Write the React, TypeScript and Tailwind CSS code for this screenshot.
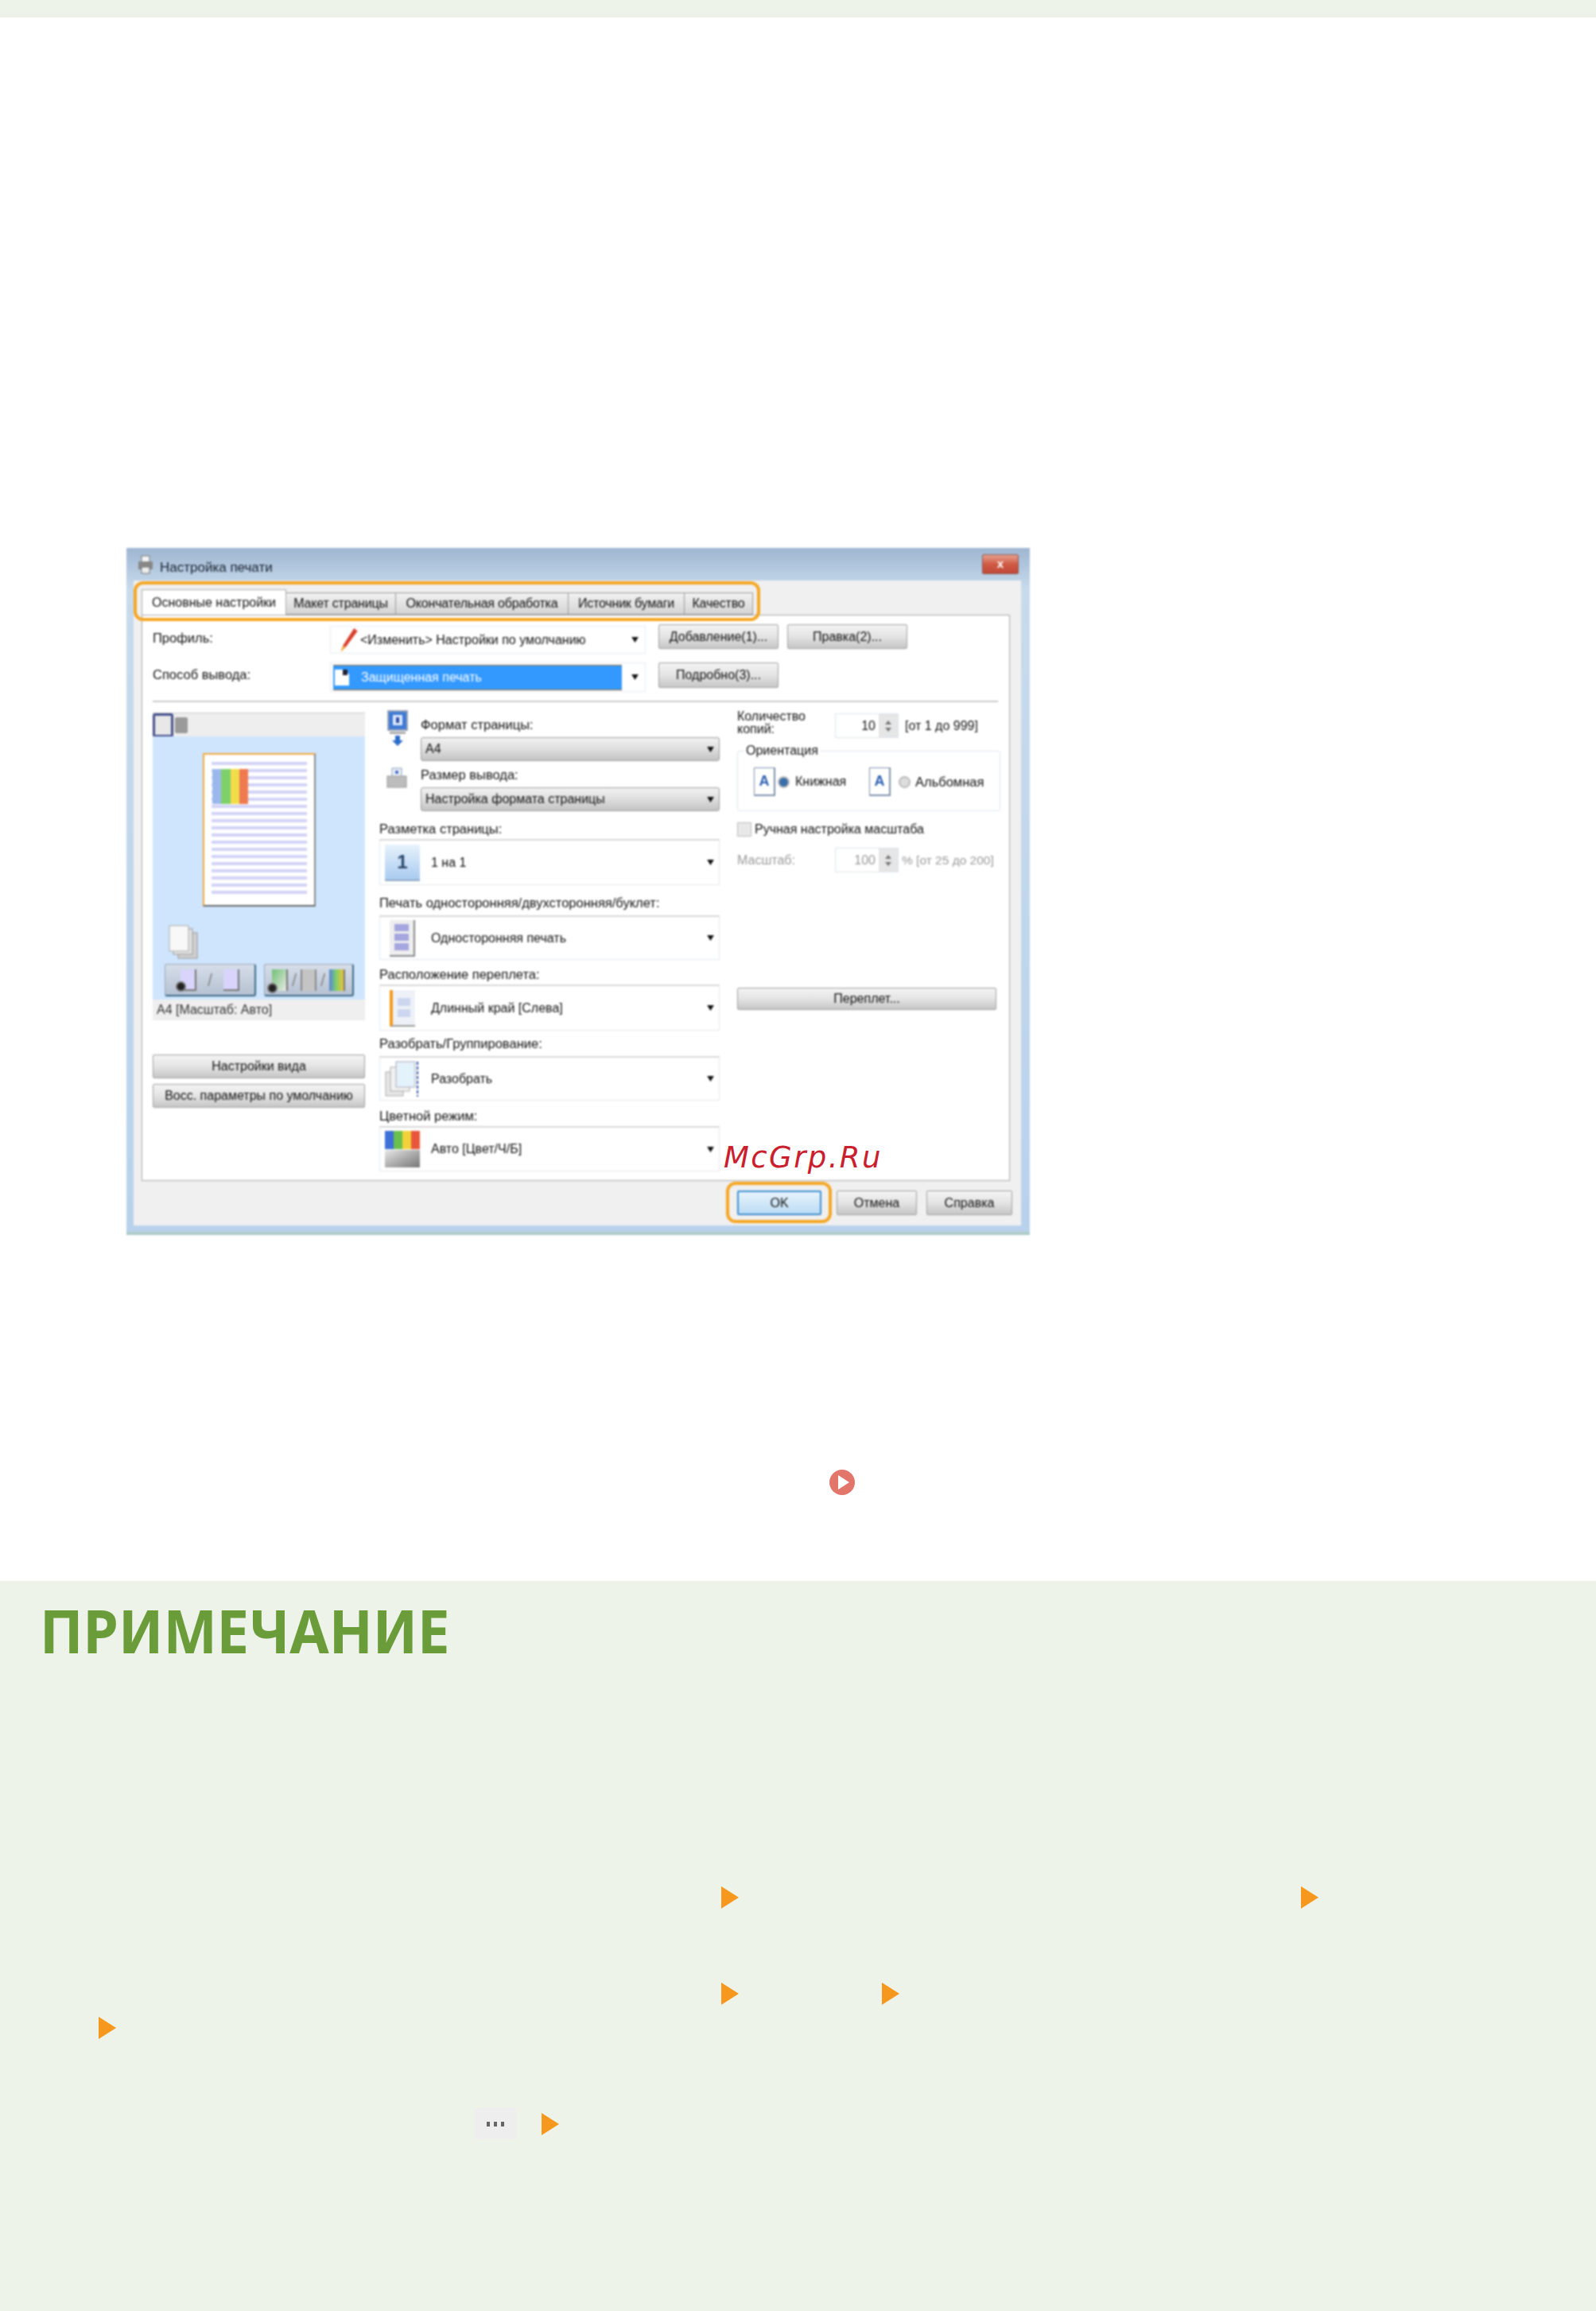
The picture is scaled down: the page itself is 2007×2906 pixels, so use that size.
import type { ReactNode } from 'react';

const Tri = ({ className = '' }: { className?: string }) => (
    <svg viewBox="0 0 22 28" className={`w-[22px] h-[28px] shrink-0 ${className}`}>
        <polygon points="0,0 22,14 0,28" fill="#f6981e" />
    </svg>
);

const Caret = () => (
    <svg viewBox="0 0 10 8" className="w-[9px] h-[7px] shrink-0">
        <polygon points="0,0 10,0 5,8" fill="#111" />
    </svg>
);

const Btn = ({ children, className = '' }: { children: ReactNode; className?: string }) => (
    <div
        className={`flex items-center justify-center rounded-[2px] border border-[#a0a0a0] bg-linear-to-b from-[#f4f4f4] via-[#e4e4e4] to-[#c6c6c6] text-[16px] text-[#111] whitespace-nowrap ${className}`}>
        {children}
    </div>
);

const GraySelect = ({ text }: { text: string }) => (
    <div className="flex items-center justify-between h-[30px] rounded-[3px] border border-[#9a9a9a] bg-linear-to-b from-[#f2f2f2] via-[#dedede] to-[#c4c4c4] pl-[5px] pr-[6px] text-[16px] text-[#111]">
        <span>{text}</span>
        <Caret />
    </div>
);

// Page icons from the dropdown boxes
const LayoutIcon = () => (
    <div className="flex items-center justify-center w-[44px] h-[46px] bg-linear-to-b from-[#e8f2fc] to-[#a9cbf0] border-b-2 border-[#8fa9c4] text-[24px] font-bold text-[#2b4a6d]">
        1
    </div>
);

const SidedIcon = () => (
    <div className="flex flex-col justify-center gap-[3px] w-[32px] h-[46px] ml-[6px] bg-[#eeeeee] border-r-2 border-b-2 border-[#888] px-[6px]">
        <div className="h-[9px] bg-[#a5a5e0]" />
        <div className="h-[9px] bg-[#a5a5e0]" />
        <div className="h-[9px] bg-[#a5a5e0]" />
    </div>
);

const BindingIcon = () => (
    <div className="flex flex-col justify-center gap-[4px] w-[32px] h-[46px] ml-[6px] bg-[#eef2f8] border-l-4 border-[#f29a1f] border-b-2 border-b-[#999] px-[6px]">
        <div className="h-[10px] bg-[#ccd6ee]" />
        <div className="h-[10px] bg-[#ccd6ee]" />
    </div>
);

const CollateIcon = () => (
    <svg viewBox="0 0 44 46" className="w-[44px] h-[46px]">
        <rect x="1" y="14" width="22" height="30" fill="#e6e6e6" stroke="#aaa" />
        <rect x="7" y="8" width="24" height="30" fill="#f2f2f2" stroke="#aaa" />
        <rect x="14" y="1" width="24" height="32" fill="#e4f2fc" stroke="#aab" />
        <line x1="41" y1="1" x2="41" y2="45" stroke="#3b5aa8" strokeWidth="2" strokeDasharray="4 2" />
    </svg>
);

const ColorIcon = () => (
    <div className="flex flex-col w-[44px] h-[46px]">
        <div className="flex h-[23px]">
            <div className="flex-1 bg-[#3f6fd8]" />
            <div className="flex-1 bg-[#69c04c]" />
            <div className="flex-1 bg-[#f2d23a]" />
            <div className="flex-1 bg-[#e8563c]" />
        </div>
        <div className="h-[23px] mt-[1px] bg-linear-to-br from-[#e8e8e8] to-[#777]" />
    </div>
);

const OPTION_BOXES = [
    { label: 'Разметка страницы:', text: '1 на 1', icon: <LayoutIcon />, labelMt: 'mt-[12px]', boxMt: 'mt-[3px]', h: 'h-[58px]' },
    { label: 'Печать односторонняя/двухсторонняя/буклет:', text: 'Односторонняя печать', icon: <SidedIcon />, labelMt: 'mt-[12px]', boxMt: 'mt-[6px]', h: 'h-[56px]' },
    { label: 'Расположение переплета:', text: 'Длинный край [Слева]', icon: <BindingIcon />, labelMt: 'mt-[8px]', boxMt: 'mt-[3px]', h: 'h-[58px]' },
    { label: 'Разобрать/Группирование:', text: 'Разобрать', icon: <CollateIcon />, labelMt: 'mt-[6px]', boxMt: 'mt-[6px]', h: 'h-[56px]' },
    { label: 'Цветной режим:', text: 'Авто [Цвет/Ч/Б]', icon: <ColorIcon />, labelMt: 'mt-[9px]', boxMt: 'mt-[3px]', h: 'h-[57px]' },
];

const TABS = [
    { name: 'Макет страницы', w: 'w-[138px]' },
    { name: 'Окончательная обработка', w: 'w-[217px]' },
    { name: 'Источник бумаги', w: 'w-[146px]' },
    { name: 'Качество', w: 'w-[86px]' },
];

const PREVIEW_LINES = Array.from({ length: 19 }, (_, i) => i);

const Spin = ({ value, dim = false }: { value: string; dim?: boolean }) => (
    <div className={`flex items-center justify-end w-[80px] h-[31px] border border-[#dde3ea] text-[16px] ${dim ? 'text-[#999]' : 'text-[#111]'}`}>
        <span className="pr-[4px]">{value}</span>
        <div className="flex flex-col items-center justify-center gap-[4px] w-[24px] h-full bg-[#e6e6e6]">
            <div className="w-0 h-0 border-x-[4px] border-x-transparent border-b-[5px] border-b-[#777]" />
            <div className="w-0 h-0 border-x-[4px] border-x-transparent border-t-[5px] border-t-[#777]" />
        </div>
    </div>
);

const OrientIcon = () => (
    <div className="flex items-center justify-center w-[27px] h-[36px] shrink-0 bg-white border border-[#7f8fa8] border-r-2 border-b-2 text-[18px] font-bold text-[#2b5fb0]">
        A
    </div>
);

const Dot = () => <div className="absolute left-[-6px] bottom-[-3px] w-[13px] h-[13px] rounded-full bg-[#222] border-2 border-[#777]" />;

function Dialog() {
    return (
        <section className="flex flex-col w-[1136px] h-[864px] ml-[159px] mt-[667px] bg-linear-to-b from-[#9fb6d2] via-[#c8dbec] via-[6%] to-[#b9d2ec] border-b-4 border-[#aecbca] blur-[1px] text-[16.5px] text-[#111] relative">
            <div className="flex items-center justify-between h-[41px] pl-[14px] pr-[14px] shrink-0">
                <div className="flex items-center gap-[8px]">
                    <svg viewBox="0 0 20 24" className="w-[20px] h-[24px]">
                        <rect x="5" y="1" width="10" height="8" fill="#f4f4f4" stroke="#777" />
                        <rect x="1" y="8" width="18" height="10" fill="#888" />
                        <rect x="5" y="15" width="10" height="8" fill="#eee" stroke="#777" />
                    </svg>
                    <span className="text-[17px] text-[#16222f] mt-[8px]">Настройка печати</span>
                </div>
                <div className="flex items-center justify-center w-[46px] h-[25px] rounded-[2px] border border-[#8a5a50] bg-linear-to-b from-[#e8a090] via-[#cf5a44] to-[#c0483a] text-white font-bold text-[15px]">
                    x
                </div>
            </div>
            <div className="flex flex-col w-[1116px] h-[811px] ml-[9px] bg-[#f0f0f0] relative">
                <div className="flex items-end h-[43px] pl-[10px] pt-[13px] shrink-0">
                    <div className="flex items-center justify-center w-[182px] h-[32px] bg-white border border-[#aaa] border-b-0 text-[16px] z-10">
                        Основные настройки
                    </div>
                    {TABS.map((t) => (
                        <div
                            key={t.name}
                            className={`flex items-center justify-center ${t.w} h-[28px] border-y border-r border-[#999] bg-linear-to-b from-[#f2f2f2] to-[#d4d4d4] text-[16px] tracking-[-0.2px] whitespace-nowrap`}>
                            {t.name}
                        </div>
                    ))}
                </div>
                {/* orange highlight around the tab strip */}
                <div className="absolute left-0 top-[1px] w-[788px] h-[50px] rounded-[12px] border-[4px] border-[#f5a623] z-20" />
                <div className="flex flex-col w-[1092px] h-[712px] ml-[10px] bg-white border border-[#a8a8a8] shrink-0">
                    <div className="flex items-start mt-[13px] pl-[13px]">
                        <span className="w-[223px] mt-[3px]">Профиль:</span>
                        <div className="flex items-center w-[397px] h-[35px] border border-[#e8ecf0] pl-[10px] pr-[8px]">
                            <svg viewBox="0 0 26 36" className="w-[26px] h-[32px] shrink-0">
                                <polygon points="20,1 25,5 8,28 4,26" fill="#d8402c" />
                                <polygon points="4,26 8,28 1,35" fill="#f0a030" />
                            </svg>
                            <span className="ml-[1px] flex-1 text-[16px] whitespace-nowrap">&lt;Изменить&gt; Настройки по умолчанию</span>
                            <Caret />
                        </div>
                        <Btn className="w-[151px] h-[31px] ml-[16px] -mt-[2px]">Добавление(1)...</Btn>
                        <Btn className="w-[151px] h-[31px] ml-[11px] -mt-[2px]">Правка(2)...</Btn>
                    </div>
                    <div className="flex items-start mt-[11px] pl-[13px]">
                        <span className="w-[223px] mt-[3px]">Способ вывода:</span>
                        <div className="flex items-center w-[397px] h-[37px] border border-[#e8ecf0] pl-[3px] pr-[8px]">
                            <div className="flex items-center w-[363px] h-[32px] bg-[#3399ff] border-y border-[#8a6a3a] text-white text-[16px]">
                                <svg viewBox="0 0 22 22" className="w-[22px] h-[22px] shrink-0">
                                    <polygon points="2,1 14,1 20,7 20,21 2,21" fill="#fff" />
                                    <rect x="12" y="1" width="6" height="7" fill="#223" />
                                </svg>
                                <span className="ml-[13px]">Защищенная печать</span>
                            </div>
                            <div className="flex-1" />
                            <Caret />
                        </div>
                        <Btn className="w-[151px] h-[32px] ml-[16px]">Подробно(3)...</Btn>
                    </div>
                    <div className="w-[1063px] h-[2px] ml-[13px] mt-[11px] bg-[#c8c8c8]" />
                    <div className="grid grid-cols-[267px_428px_330px] gap-x-[18px] ml-[13px] mt-[10px]">
                        <div className="flex flex-col">
                            <div className="flex items-center gap-[2px] h-[30px] mt-[3px] bg-[#eeeeee] border-t border-[#ccc]">
                                <div className="w-[26px] h-[30px] rounded-[3px] border-[3px] border-[#46508c] bg-[#e8e8e8]" />
                                <div className="w-[16px] h-[20px] bg-[#9a9a9a] rounded-[2px]" />
                            </div>
                            <div className="flex flex-col h-[331px] bg-[#cfe5fd]">
                                <div className="w-[142px] h-[193px] ml-[63px] mt-[21px] bg-white border-l-2 border-t-2 border-[#f0a93a] border-r-2 border-r-[#888] border-b-2 border-b-[#666] relative">
                                    <div className="flex flex-col gap-[5px] pt-[9px] px-[9px]">
                                        {PREVIEW_LINES.map((i) => (
                                            <div key={i} className="h-[4px] bg-[#d2d2f6]" />
                                        ))}
                                    </div>
                                    <div className="absolute left-[10px] top-[18px] flex w-[45px] h-[44px]">
                                        <div className="flex-1 bg-[#9ab8ec]" />
                                        <div className="flex-1 bg-[#7ed06a]" />
                                        <div className="flex-1 bg-[#f2dc4a]" />
                                        <div className="flex-1 bg-[#f07a50]" />
                                    </div>
                                </div>
                                <svg viewBox="0 0 38 44" className="w-[38px] h-[44px] ml-[20px] mt-[23px]">
                                    <rect x="12" y="10" width="24" height="32" fill="#cfcfcf" stroke="#999" />
                                    <rect x="6" y="5" width="24" height="32" fill="#e2e2e2" stroke="#999" />
                                    <rect x="1" y="1" width="24" height="32" fill="#f8f8f8" stroke="#aaa" />
                                </svg>
                                <div className="flex gap-[10px] ml-[15px] mt-[5px]">
                                    <div className="flex items-center justify-center gap-[14px] w-[115px] h-[41px] bg-linear-to-b from-[#d6deea] to-[#b6c1d2] border border-[#9aa8ba] border-r-2 border-b-2 border-r-[#3d6a85] border-b-[#3d6a85] rounded-[3px]">
                                        <div className="relative w-[20px] h-[27px] bg-[#d8d4fb] border-r-2 border-b-2 border-[#777]">
                                            <Dot />
                                        </div>
                                        <span className="text-[#888] text-[22px]">/</span>
                                        <div className="w-[20px] h-[27px] bg-[#d8d4fb] border-r-2 border-b-2 border-[#777]" />
                                    </div>
                                    <div className="flex items-center justify-center gap-[5px] w-[113px] h-[41px] bg-linear-to-b from-[#d6deea] to-[#b6c1d2] border border-[#9aa8ba] border-r-2 border-b-2 border-r-[#3d6a85] border-b-[#3d6a85] rounded-[3px]">
                                        <div className="relative w-[20px] h-[27px] bg-linear-to-br from-[#6cc070] to-[#e8e8e8] border-r-2 border-[#777]">
                                            <Dot />
                                        </div>
                                        <span className="text-[#888] text-[22px]">/</span>
                                        <div className="w-[20px] h-[27px] bg-[#c4c4c4] border-x-2 border-[#888]" />
                                        <span className="text-[#888] text-[22px]">/</span>
                                        <div className="w-[20px] h-[27px] bg-linear-to-r from-[#5a80d0] via-[#80d060] to-[#e8c040] border-r-2 border-[#777]" />
                                    </div>
                                </div>
                            </div>
                            <div className="flex items-center h-[26px] pl-[5px] bg-[#efefef] text-[16px] text-[#333] whitespace-nowrap">A4 [Масштаб: Авто]</div>
                            <Btn className="h-[30px] mt-[43px] text-[16.5px]">Настройки вида</Btn>
                            <Btn className="h-[30px] mt-[7px] text-[15.5px]">Восс. параметры по умолчанию</Btn>
                        </div>

                        <div className="flex flex-col">
                            <div className="flex">
                                <div className="flex flex-col w-[52px] pl-[9px]">
                                    <svg viewBox="0 0 28 47" className="w-[28px] h-[47px]">
                                        <rect x="2" y="1" width="24" height="24" fill="#3f7ad6" stroke="#9aa4b4" strokeWidth="2" />
                                        <rect x="8" y="6" width="12" height="13" fill="#dce8f8" />
                                        <rect x="12" y="9" width="4" height="7" fill="#2c4ca8" />
                                        <rect x="4" y="27" width="20" height="3" fill="#aaa" />
                                        <polygon points="14,45 7,38 21,38" fill="#2c6cc8" />
                                        <rect x="11" y="32" width="6" height="7" fill="#2c6cc8" />
                                    </svg>
                                    <svg viewBox="0 0 26 26" className="w-[26px] h-[26px] mt-[25px]">
                                        <rect x="7" y="1" width="12" height="12" fill="#eef2f8" stroke="#8a9ab8" />
                                        <rect x="11" y="4" width="4" height="4" fill="#4a70c8" />
                                        <rect x="1" y="11" width="24" height="14" fill="#bdbdbd" stroke="#999" />
                                    </svg>
                                </div>
                                <div className="flex flex-col w-[376px] pt-[8px]">
                                    <span className="h-[20px] leading-[20px]">Формат страницы:</span>
                                    <div className="mt-[6px]">
                                        <GraySelect text="A4" />
                                    </div>
                                    <span className="h-[20px] leading-[20px] mt-[7px]">Размер вывода:</span>
                                    <div className="mt-[6px]">
                                        <GraySelect text="Настройка формата страницы" />
                                    </div>
                                </div>
                            </div>
                            {OPTION_BOXES.map((b) => (
                                <div key={b.label} className="flex flex-col">
                                    <span className={`h-[20px] leading-[20px] whitespace-nowrap ${b.labelMt}`}>{b.label}</span>
                                    <div className={`flex items-center ${b.h} ${b.boxMt} border border-[#e3e6ea] border-t-2 border-t-[#d8d8d8] pl-[6px] pr-[6px]`}>
                                        <div className="w-[58px] shrink-0">{b.icon}</div>
                                        <span className="flex-1 text-[16px] whitespace-nowrap">{b.text}</span>
                                        <Caret />
                                    </div>
                                </div>
                            ))}
                        </div>

                        <div className="flex flex-col ml-[4px] w-[326px]">
                            <div className="flex">
                                <span className="w-[123px] leading-[16px] text-[16px]">
                                    Количество
                                    <br />
                                    копий:
                                </span>
                                <div className="flex items-center h-[31px] mt-[4px]">
                                    <Spin value="10" />
                                    <span className="ml-[8px] whitespace-nowrap text-[16px]">[от 1 до 999]</span>
                                </div>
                            </div>
                            <fieldset className="h-[84px] mt-[8px] border border-[#dfe5ec] rounded-[3px] px-[20px]">
                                <legend className="ml-[-12px] px-[2px] text-[16px] leading-[16px]">Ориентация</legend>
                                <div className="flex items-center mt-[13px] text-[16px]">
                                    <OrientIcon />
                                    <div className="w-[15px] h-[15px] ml-[3px] rounded-full bg-[#3a6ea8] border-2 border-[#bbb] shrink-0" />
                                    <span className="ml-[7px] w-[93px] shrink-0">Книжная</span>
                                    <OrientIcon />
                                    <div className="w-[15px] h-[15px] ml-[10px] rounded-full bg-[#ddd] border-2 border-[#bbb] shrink-0" />
                                    <span className="ml-[6px] whitespace-nowrap text-[16.5px]">Альбомная</span>
                                </div>
                            </fieldset>
                            <div className="flex items-center h-[18px] mt-[14px]">
                                <div className="w-[18px] h-[18px] bg-[#e8e8e8] border border-[#bbb]" />
                                <span className="ml-[4px] whitespace-nowrap text-[16px]">Ручная настройка масштаба</span>
                            </div>
                            <div className="flex items-center h-[31px] mt-[14px] text-[#999]">
                                <span className="w-[123px] text-[16px]">Масштаб:</span>
                                <Spin value="100" dim />
                                <span className="ml-[4px] whitespace-nowrap text-[15.5px]">% [от 25 до 200]</span>
                            </div>
                            <Btn className="h-[28px] mt-[145px]">Переплет...</Btn>
                        </div>
                    </div>
                </div>
                <div className="flex justify-end items-center gap-[12px] mt-[12px] pr-[11px] text-[16px]">
                    <div className="flex items-center justify-center w-[106px] h-[31px] mr-[7px] rounded-[2px] border-2 border-[#3b8ed0] bg-linear-to-b from-[#e8f4fc] to-[#bcdcf4]">OK</div>
                    <Btn className="w-[101px] h-[31px]">Отмена</Btn>
                    <Btn className="w-[108px] h-[31px]">Справка</Btn>
                </div>
                {/* orange highlight around OK */}
                <div className="absolute left-[745px] top-[756px] w-[133px] h-[52px] rounded-[12px] border-[4px] border-[#f5a623]" />
            </div>
        </section>
    );
}

export default function App() {
    return (
        <div className="flex flex-col relative w-[2007px] h-[2906px] bg-white font-['Liberation_Sans',sans-serif]">
            <div className="h-[22px] bg-[#edf3e9] shrink-0" />
            <Dialog />
            <svg viewBox="0 0 32 32" className="w-[32px] h-[32px] ml-[1043px] mt-[295px] shrink-0">
                <circle cx="16" cy="16" r="16" fill="#e2766a" />
                <polygon points="11,7 25,16 11,25" fill="#fff" />
            </svg>
            <div className="flex flex-col flex-1 mt-[108px] bg-[#edf3e9]">
                <h2 className="h-[55px] ml-[50px] mt-[34px] mb-[3px] origin-left scale-x-[0.94] font-['Noto_Sans',sans-serif] font-bold text-[76px] leading-[55px] text-[#6a9c3a] whitespace-nowrap">
                    ПРИМЕЧАНИЕ
                </h2>
                <div className="flex mt-[292px]">
                    <Tri className="ml-[907px]" />
                    <Tri className="ml-[707px]" />
                </div>
                <div className="flex mt-[93px]">
                    <Tri className="ml-[907px]" />
                    <Tri className="ml-[180px]" />
                </div>
                <div className="flex mt-[15px]">
                    <Tri className="ml-[124px]" />
                </div>
                <div className="flex items-center mt-[87px]">
                    <div className="flex items-center justify-center gap-[5px] w-[52px] h-[39px] ml-[597px] bg-[#eeeeee]">
                        <div className="w-[4px] h-[6px] bg-[#666] blur-[0.5px]" />
                        <div className="w-[4px] h-[6px] bg-[#666] blur-[0.5px]" />
                        <div className="w-[4px] h-[6px] bg-[#666] blur-[0.5px]" />
                    </div>
                    <Tri className="ml-[32px]" />
                </div>
            </div>
            {/* watermark sits over the dialog */}
            <div className="absolute left-[910px] top-[1428px] font-['DejaVu_Sans',sans-serif] italic text-[37px] tracking-[2.4px] text-[#c8202c] whitespace-nowrap">
                McGrp.Ru
            </div>
        </div>
    );
}
